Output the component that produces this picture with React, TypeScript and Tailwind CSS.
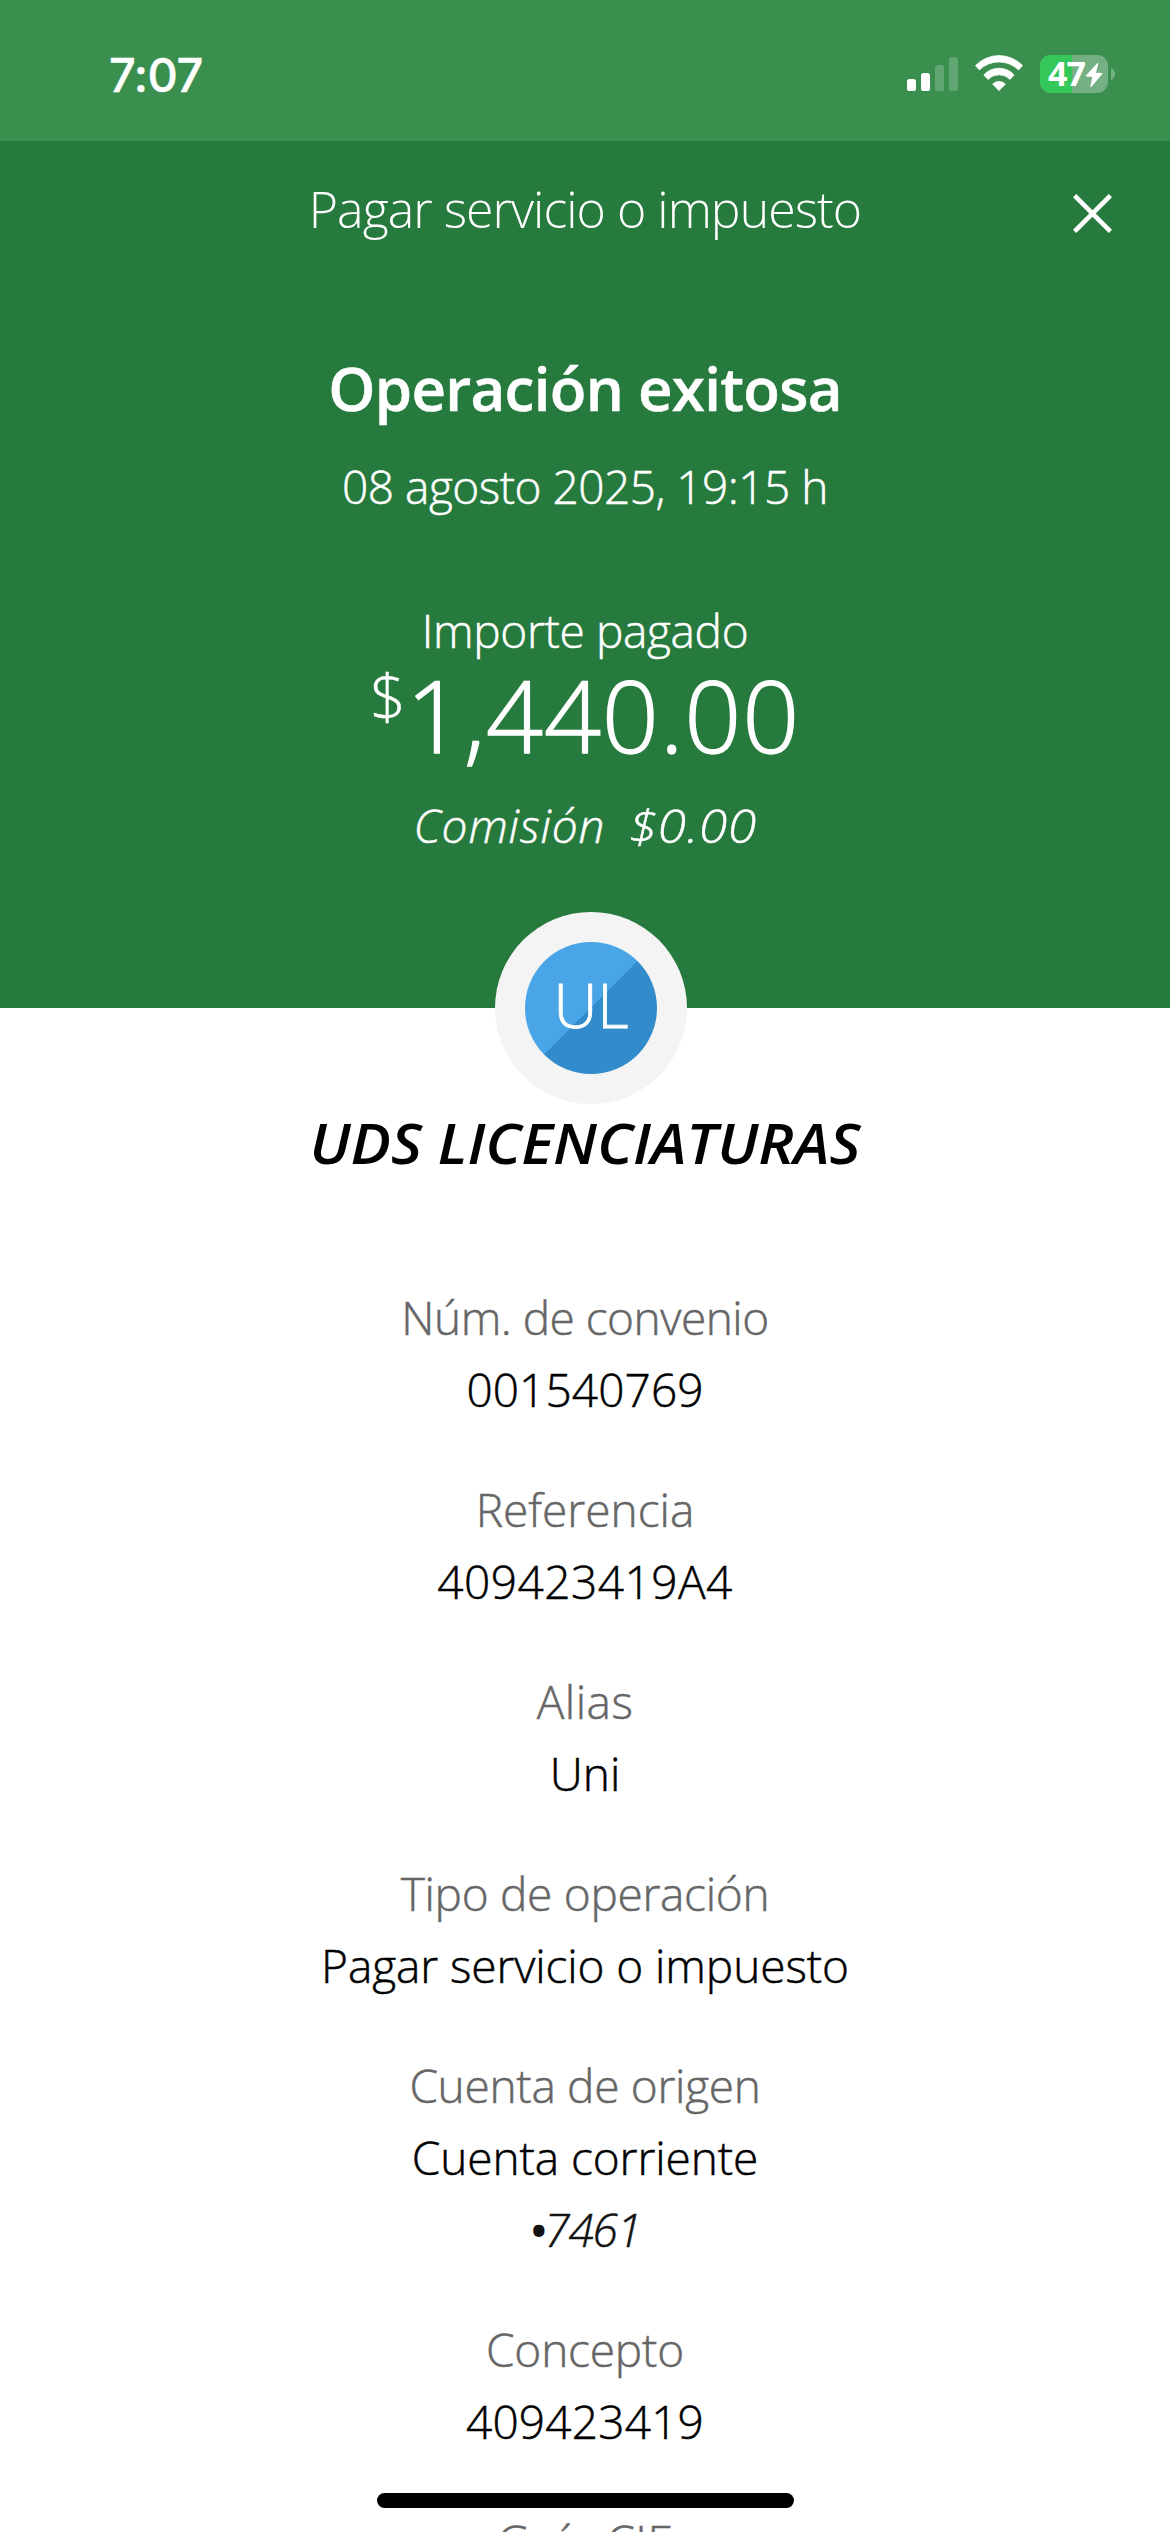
import React from 'react';

interface Detail {
  label: string;
  labelClass: string;
  values: { text: string; className: string; masked?: boolean }[];
}

const details: Detail[] = [
  {
    label: 'Núm. de convenio',
    labelClass: 'tracking-[-0.5px]',
    values: [{ text: '001540769', className: 'tracking-[0.1px]' }],
  },
  {
    label: 'Referencia',
    labelClass: 'tracking-[0px]',
    values: [{ text: '409423419A4', className: 'tracking-[0.5px]' }],
  },
  {
    label: 'Alias',
    labelClass: 'tracking-[0.5px]',
    values: [{ text: 'Uni', className: 'tracking-[0px]' }],
  },
  {
    label: 'Tipo de operación',
    labelClass: 'tracking-[-0.3px]',
    values: [{ text: 'Pagar servicio o impuesto', className: 'tracking-[-0.1px]' }],
  },
  {
    label: 'Cuenta de origen',
    labelClass: 'tracking-[-0.3px]',
    values: [
      { text: 'Cuenta corriente', className: 'tracking-[-0.1px]' },
      { text: '7461', className: 'italic text-[#121212] tracking-[-1.2px]', masked: true },
    ],
  },
  {
    label: 'Concepto',
    labelClass: 'tracking-[-0.2px]',
    values: [{ text: '409423419', className: 'tracking-[0.2px]' }],
  },
  {
    label: 'Guía CIE',
    labelClass: 'tracking-[0.5px]',
    values: [],
  },
];

const SignalIcon = () => (
  <svg width="52" height="34" viewBox="0 0 52 34" fill="white">
    <rect x="0" y="22" width="9" height="12" rx="2.6" />
    <rect x="14" y="16" width="9" height="18" rx="2.6" />
    <rect x="28" y="8" width="9" height="26" rx="2.6" opacity="0.2" />
    <rect x="42" y="0" width="9" height="34" rx="2.6" opacity="0.2" />
  </svg>
);

const WifiIcon = () => (
  <svg width="48" height="36" viewBox="0 0 48 36" fill="white" stroke="white" strokeWidth="0.8" strokeLinejoin="round">
    <path d="M0.5 10.6 A32.5 32.5 0 0 1 47.5 10.6 L43.6 14.9 A28 28 0 0 0 4.4 14.9 Z" />
    <path d="M8.8 19.9 A20.7 20.7 0 0 1 39.2 19.9 L35 24.4 A15.5 15.5 0 0 0 13 24.4 Z" />
    <path d="M17.6 29.1 A9 9 0 0 1 30.4 29.1 L24 35.6 Z" />
  </svg>
);

const BatteryIcon = () => (
  <div className="flex items-center gap-[3px]">
    <div className="relative flex h-[38px] w-[68px] rounded-[11px] bg-[#75b085]">
      <div className="h-full w-[32px] rounded-l-[11px] bg-[#34c759]" />
      <span className="absolute left-[8px] top-0 font-['Open_Sans',sans-serif] text-[34px] font-bold leading-[36px] tracking-[-0.9px] text-white [-webkit-text-stroke:0px]">
        47
      </span>
      <svg
        className="absolute left-0 top-0"
        width="68"
        height="38"
        viewBox="0 0 68 38"
        fill="white"
        stroke="white"
        strokeWidth="1.2"
        strokeLinejoin="round"
      >
        <path d="M57.6 8.6 L46.4 20.8 L53 21.3 L51 31.4 L61.8 18.7 L55.3 18.1 Z" />
      </svg>
    </div>
    <svg width="4" height="12" viewBox="0 0 4 12" fill="#75b085">
      <path d="M0 0 C2.6 1 4 3.4 4 6 C4 8.6 2.6 11 0 12 Z" />
    </svg>
  </div>
);

const StatusBar = () => (
  <div className="flex h-[141px] items-center justify-between bg-[#3a8f4f] pl-[109px] pr-[55px] pt-[7px]">
    <span className="font-['Inter',sans-serif] text-[47px] font-medium leading-none tracking-[-0.5px] text-white [-webkit-text-stroke:0.4px]">
      7:07
    </span>
    <div className="flex items-center">
      <SignalIcon />
      <div className="ml-4 mb-[2px]">
        <WifiIcon />
      </div>
      <div className="ml-[17px]">
        <BatteryIcon />
      </div>
    </div>
  </div>
);

const Header = () => (
  <header className="flex h-[867px] flex-col items-center text-white">
    <div className="flex h-36 w-full items-center">
      <div className="w-[130px]" />
      <h1 className="flex-1 pb-[7px] text-center text-[50px] tracking-[-0.96px] [-webkit-text-stroke:0px]">
        Pagar servicio o impuesto
      </h1>
      <button className="flex w-[130px] justify-start pl-[33px]" aria-label="Cerrar">
        <svg width="39" height="39" viewBox="0 0 39 39" stroke="white" strokeWidth="4.6">
          <path d="M1.6 1.6 L37.4 37.4 M37.4 1.6 L1.6 37.4" />
        </svg>
      </button>
    </div>

    <h2 className="mt-[63px] text-[60px] font-semibold leading-[80px] tracking-[-0.7px]">Operación exitosa</h2>
    <p className="mt-[22px] text-[46px] leading-[72px] tracking-[-0.5px]">08 agosto 2025, 19:15 h</p>

    <p className="mt-[78px] text-[46px] leading-[60px] tracking-[-0.35px]">Importe pagado</p>
    <div className="mt-1 flex items-start">
      <span className="text-[63px] leading-[63px] [-webkit-text-stroke:0.4px]">$</span>
      <span className="text-[100px] leading-[100px] tracking-[0.8px] [-webkit-text-stroke:1.3px]">1,440.00</span>
    </div>
    <p className="mt-[31px] flex gap-6 text-[46px] italic leading-[60px]">
      <span className="tracking-[0.9px]">Comisión</span>
      <span className="mr-[12px] origin-left scale-x-[1.11] tracking-[0.7px]">$0.00</span>
    </p>
  </header>
);

const Avatar = () => (
  <div className="-mt-24 ml-3 flex h-48 w-48 items-center justify-center rounded-full bg-[#f4f4f4]">
    <div className="flex h-[132px] w-[132px] items-center justify-center rounded-full bg-[linear-gradient(135deg,#49a5e6_50%,#328bcb_50%)] pb-2">
      <span className="text-[61px] leading-none text-white [-webkit-text-stroke:0.8px]">UL</span>
    </div>
  </div>
);

const App: React.FC = () => {
  return (
    <div className="relative h-[2532px] w-[1170px] overflow-hidden bg-white font-['Open_Sans','Noto_Sans',sans-serif] font-light text-black [-webkit-text-stroke:0.5px]">
      {/* Green area */}
      <div className="bg-[#277a3e]">
        <StatusBar />
        <Header />
      </div>

      {/* Recipient */}
      <div className="flex flex-col items-center">
        <Avatar />
        <h3 className="mt-[2px] scale-x-[1.072] text-[56px] font-semibold italic leading-[72px] [-webkit-text-stroke:0px]">
          UDS LICENCIATURAS
        </h3>
      </div>

      {/* Operation details */}
      <dl className="mt-[103px] flex flex-col gap-12 text-center text-[46px] leading-[72px]">
        {details.map(item => (
          <div key={item.label}>
            <dt className={`text-[#666666] ${item.labelClass}`}>{item.label}</dt>
            {item.values.map(value => (
              <dd key={value.text} className={value.className}>
                {value.masked && <span className="-mr-[1px] font-semibold [-webkit-text-stroke:0px]">•</span>}
                {value.text}
              </dd>
            ))}
          </div>
        ))}
      </dl>

      {/* Home indicator */}
      <div className="absolute bottom-6 left-[377px] h-[15px] w-[417px] rounded-full bg-black" />
    </div>
  );
};

export default App;
